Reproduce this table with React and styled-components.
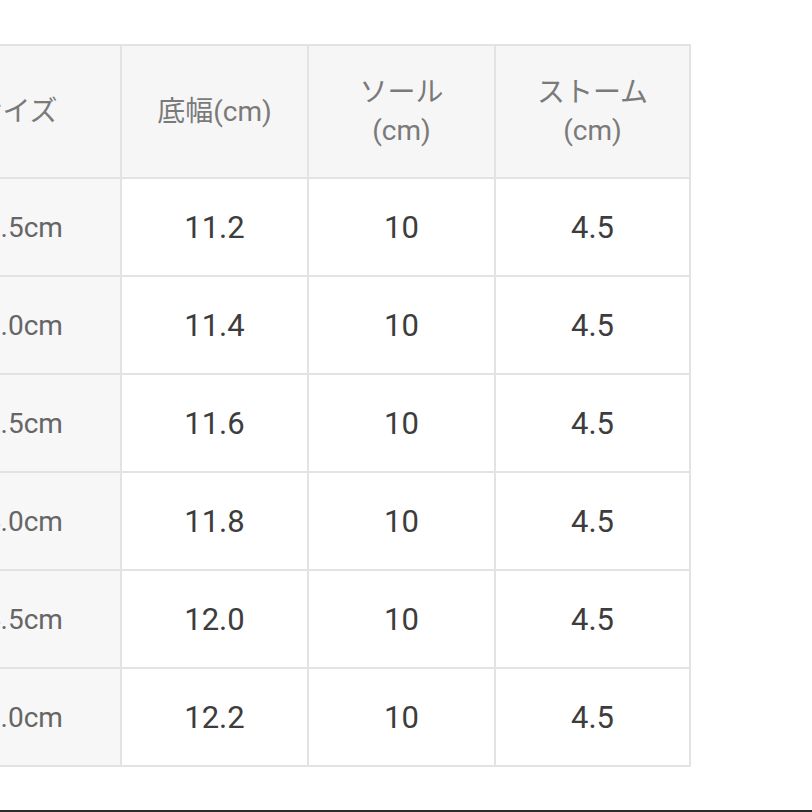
import React from 'react';
import styled, { createGlobalStyle } from 'styled-components';

const GlobalStyle = createGlobalStyle`
  html, body {
    margin: 0;
    padding: 0;
    background: #fff;
  }
  * {
    box-sizing: border-box;
  }
`;

const Page = styled.div`
  width: 812px;
  height: 812px;
  overflow: hidden;
  padding-top: 44px;
  border-bottom: 2px solid #2b2b2b;
  background: #fff;
  font-family: Roboto, "Noto Sans CJK JP", sans-serif;
`;

const Table = styled.div`
  display: grid;
  grid-template-columns: 208px 185px 185px 193px;
  grid-template-rows: 131px repeat(6, 96px);
  gap: 2px;
  width: max-content;
  margin-left: -90px;
  border: 2px solid #e3e3e3;
  background: #e3e3e3;
`;

const HeadCell = styled.div`
  display: flex;
  align-items: center;
  justify-content: center;
  text-align: center;
  background: #f6f6f6;
  color: #7a7a7a;
  font-size: 28px;
  line-height: 38px;
`;

const Cell = styled.div`
  display: flex;
  align-items: center;
  justify-content: center;
  background: ${(p) => (p.$label ? '#f7f7f7' : '#fff')};
  color: ${(p) => (p.$label ? '#666' : '#3d3d3d')};
  font-size: ${(p) => (p.$label ? '28px' : '31px')};
`;

const headers = [
  ['サイズ'],
  ['底幅(cm)'],
  ['ソール', '(cm)'],
  ['ストーム', '(cm)'],
];

const rows = [
  ['22.5cm', '11.2', '10', '4.5'],
  ['23.0cm', '11.4', '10', '4.5'],
  ['23.5cm', '11.6', '10', '4.5'],
  ['24.0cm', '11.8', '10', '4.5'],
  ['24.5cm', '12.0', '10', '4.5'],
  ['25.0cm', '12.2', '10', '4.5'],
];

export default function App() {
  return (
    <>
      <GlobalStyle />
      <Page>
        <Table>
          {headers.map((lines, i) => (
            <HeadCell key={i}>
              <div>
                {lines.map((l) => (
                  <div key={l}>{l}</div>
                ))}
              </div>
            </HeadCell>
          ))}
          {rows.map((row) =>
            row.map((v, j) => (
              <Cell key={row[0] + j} $label={j === 0}>
                {v}
              </Cell>
            ))
          )}
        </Table>
      </Page>
    </>
  );
}
